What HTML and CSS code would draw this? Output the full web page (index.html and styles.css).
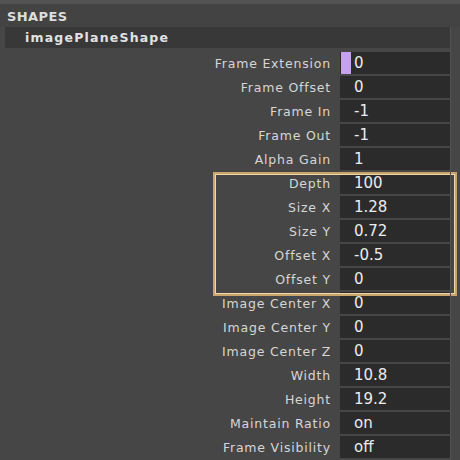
FILE: index.html
```html
<!DOCTYPE html>
<html>
<head>
<meta charset="utf-8">
<link rel="stylesheet" href="styles.css">
</head>
<body>
<div class="panel">
  <div class="topstrip"></div>
  <div class="header">SHAPES</div>
  <div class="subheader">imagePlaneShape</div>
  <div class="rows">
    <div class="label">Frame Extension</div><div class="field"><span class="mark"></span>0</div>
    <div class="label">Frame Offset</div><div class="field">0</div>
    <div class="label">Frame In</div><div class="field">-1</div>
    <div class="label">Frame Out</div><div class="field">-1</div>
    <div class="label">Alpha Gain</div><div class="field">1</div>
    <div class="label">Depth</div><div class="field">100</div>
    <div class="label">Size X</div><div class="field">1.28</div>
    <div class="label">Size Y</div><div class="field">0.72</div>
    <div class="label">Offset X</div><div class="field">-0.5</div>
    <div class="label">Offset Y</div><div class="field">0</div>
    <div class="label">Image Center X</div><div class="field">0</div>
    <div class="label">Image Center Y</div><div class="field">0</div>
    <div class="label">Image Center Z</div><div class="field">0</div>
    <div class="label">Width</div><div class="field">10.8</div>
    <div class="label">Height</div><div class="field">19.2</div>
    <div class="label">Maintain Ratio</div><div class="field">on</div>
    <div class="label">Frame Visibility</div><div class="field">off</div>
  </div>
  <div class="highlight"></div>
  <div class="vline"></div>
</div>
</body>
</html>
```

FILE: styles.css
```css
html, body {
  margin: 0;
  padding: 0;
  background: #464646;
}
.panel {
  position: relative;
  width: 460px;
  height: 460px;
  overflow: hidden;
  background: #464646;
  font-family: "DejaVu Sans", sans-serif;
}
.topstrip {
  height: 4px;
  background: #525252;
}
.header {
  height: 23px;
  box-sizing: border-box;
  padding: 4px 0 0 7px;
  background: #434343;
  color: #dedede;
  font-size: 13px;
  font-weight: bold;
  letter-spacing: 0.4px;
  line-height: 18px;
}
.subheader {
  margin-left: 5px;
  width: 446px;
  height: 21px;
  box-sizing: border-box;
  padding-left: 20px;
  background: #383838;
  color: #e2e2e2;
  font-size: 12.5px;
  font-weight: bold;
  letter-spacing: 1.2px;
  line-height: 22px;
}
.rows {
  display: grid;
  grid-template-columns: 331px 110px;
  column-gap: 9px;
  row-gap: 2px;
  margin-top: 4px;
  grid-auto-rows: 22px;
}
.label {
  text-align: right;
  color: #d6d6d6;
  font-size: 12.5px;
  letter-spacing: 0.8px;
  line-height: 23px;
}
.field {
  display: flex;
  align-items: center;
  background: #2b2b2b;
  color: #ececec;
  font-size: 15px;
  padding-left: 14px;
  position: relative;
}
.mark {
  position: absolute;
  left: 1px;
  top: 0;
  width: 10px;
  height: 22px;
  background: #c6a2ee;
}
.highlight {
  position: absolute;
  left: 213px;
  top: 172px;
  width: 244px;
  height: 124px;
  box-sizing: border-box;
  border: 2px solid #c9a46c;
  box-shadow: inset 0 0 0 1px #eed6a6;
}
.vline {
  position: absolute;
  left: 450px;
  top: 27px;
  width: 1px;
  height: 433px;
  background: #525252;
}
```
